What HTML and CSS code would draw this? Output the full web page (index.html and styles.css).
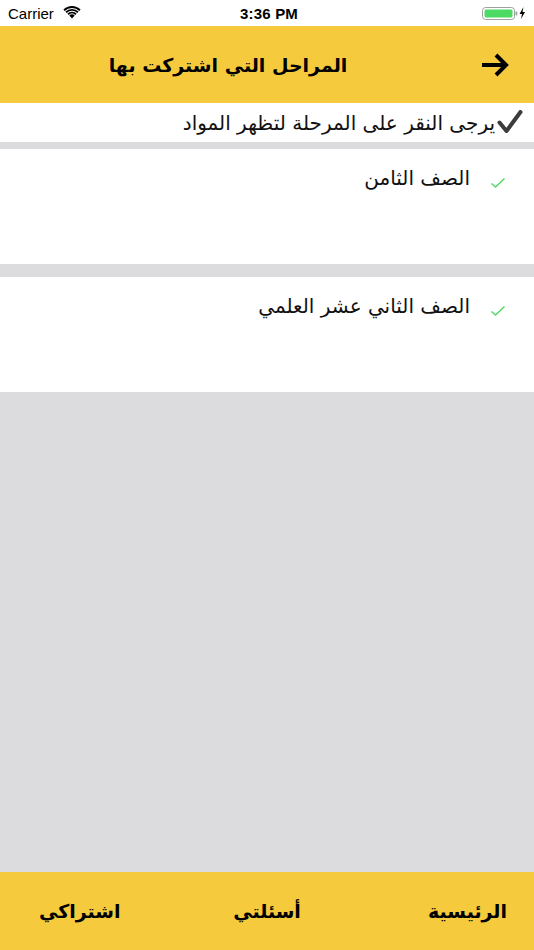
FILE: index.html
```html
<!DOCTYPE html>
<html lang="ar">
<head>
<meta charset="utf-8">
<link rel="stylesheet" href="styles.css">
</head>
<body>
<div class="screen">
  <div class="status">
    <div class="st-left">
      <span>Carrier</span>
      <svg width="18" height="13" viewBox="0 0 18 13" class="wifi">
        <path d="M9 12.5 L6.3 9.6 A3.9 3.9 0 0 1 11.7 9.6 Z" fill="#000"/>
        <path d="M4.4 7.6 A6.6 6.6 0 0 1 13.6 7.6 L12.3 8.9 A4.8 4.8 0 0 0 5.7 8.9 Z" fill="#000"/>
        <path d="M2.4 5.6 A9.4 9.4 0 0 1 15.6 5.6 L14.3 6.9 A7.6 7.6 0 0 0 3.7 6.9 Z" fill="#000"/>
        <path d="M0.4 3.6 A12.2 12.2 0 0 1 17.6 3.6 L16.3 4.9 A10.4 10.4 0 0 0 1.7 4.9 Z" fill="#000"/>
      </svg>
    </div>
    <div class="st-time">3:36 PM</div>
    <div class="st-right">
      <svg width="44" height="14" viewBox="0 0 44 14">
        <rect x="0.5" y="1.5" width="32" height="12" rx="3" fill="none" stroke="#a0a0a0"/>
        <rect x="2.5" y="3.5" width="28" height="8" rx="1.5" fill="#4cd964"/>
        <rect x="33.5" y="5.5" width="1.8" height="4" rx="0.8" fill="#a0a0a0"/>
        <path d="M41.5 1 L37.5 8 L40 8 L39 13 L43 6 L40.5 6 Z" fill="#000"/>
      </svg>
    </div>
  </div>
  <div class="header">
    <div class="title">المراحل التي اشتركت بها</div>
    <svg class="arrow" width="30" height="26" viewBox="0 0 30 26">
      <path d="M2 13 H26 M16 3 L26 13 L16 23" fill="none" stroke="#000" stroke-width="4" stroke-linecap="butt" stroke-linejoin="miter"/>
    </svg>
  </div>
  <div class="notice">
    <svg class="bigcheck" width="26" height="24" viewBox="0 0 26 24"><path d="M2.5 12.5 L9.5 21 L23.5 2" fill="none" stroke="#3c3c3c" stroke-width="4" stroke-linejoin="round" stroke-linecap="round"/></svg>
    <span>يرجى النقر على المرحلة لتظهر المواد</span>
  </div>
  <div class="list">
    <div class="card">
      <svg class="gcheck" width="16" height="12" viewBox="0 0 16 12"><path d="M1.5 6.5 L5.5 10 L14.5 1.5" fill="none" stroke="#4cd964" stroke-width="1.4"/></svg>
      <span class="ctext">الصف الثامن</span>
    </div>
    <div class="card">
      <svg class="gcheck" width="16" height="12" viewBox="0 0 16 12"><path d="M1.5 6.5 L5.5 10 L14.5 1.5" fill="none" stroke="#4cd964" stroke-width="1.4"/></svg>
      <span class="ctext">الصف الثاني عشر العلمي</span>
    </div>
  </div>
  <div class="filler"></div>
  <div class="tabbar">
    <div class="tab t-right">الرئيسية</div>
    <div class="tab t-mid">أسئلتي</div>
    <div class="tab t-left">اشتراكي</div>
  </div>
</div>
</body>
</html>
```

FILE: styles.css
```css
* { box-sizing: border-box; }
html, body { margin: 0; padding: 0; }
body { width: 534px; height: 950px; overflow: hidden; font-family: "DejaVu Sans", "Noto Sans", sans-serif; }
.screen { width: 534px; height: 950px; display: flex; flex-direction: column; background: #dcdbde; }
.status { height: 26px; background: #fff; display: flex; align-items: center; justify-content: space-between; padding: 0 8px; font-family: "Liberation Sans", sans-serif; font-size: 15px; color: #000; }
.st-left { display: flex; align-items: center; gap: 9px; width: 120px; }
.wifi { margin-top: -2px; }
.st-time { font-weight: bold; font-size: 15px; letter-spacing: 0.2px; margin-left: 4px; }
.st-right { width: 120px; display: flex; justify-content: flex-end; }
.header { height: 77px; background: #f5cb3d; display: flex; align-items: center; justify-content: space-between; direction: ltr; padding: 0 24px 0 0; }
.title { flex: 1; text-align: center; font-weight: bold; font-size: 19px; direction: rtl; padding-right: 24px; color: #000; }
.arrow { display: block; }
.notice { height: 39px; background: #fff; direction: rtl; display: flex; align-items: center; padding-right: 11px; font-size: 20px; color: #111; gap: 2px; }
.bigcheck { display: block; margin-top: -2px; }
.list { padding-top: 7px; display: flex; flex-direction: column; gap: 13px; }
.card { height: 115px; background: #fff; direction: rtl; display: flex; align-items: flex-start; padding: 17px 28px 0 0; gap: 20px; }
.gcheck { margin-top: 11px; }
.ctext { font-size: 20px; color: #111; }
.filler { flex: 1; }
.tabbar { height: 78px; background: #f5cb3d; display: flex; align-items: center; justify-content: space-between; direction: rtl; padding: 0 27px 0 39px; font-weight: bold; font-size: 19px; color: #000; }
.tab { width: 90px; }
.t-right { text-align: right; }
.t-mid { text-align: center; margin-right: 12px; }
.t-left { text-align: left; }
```
